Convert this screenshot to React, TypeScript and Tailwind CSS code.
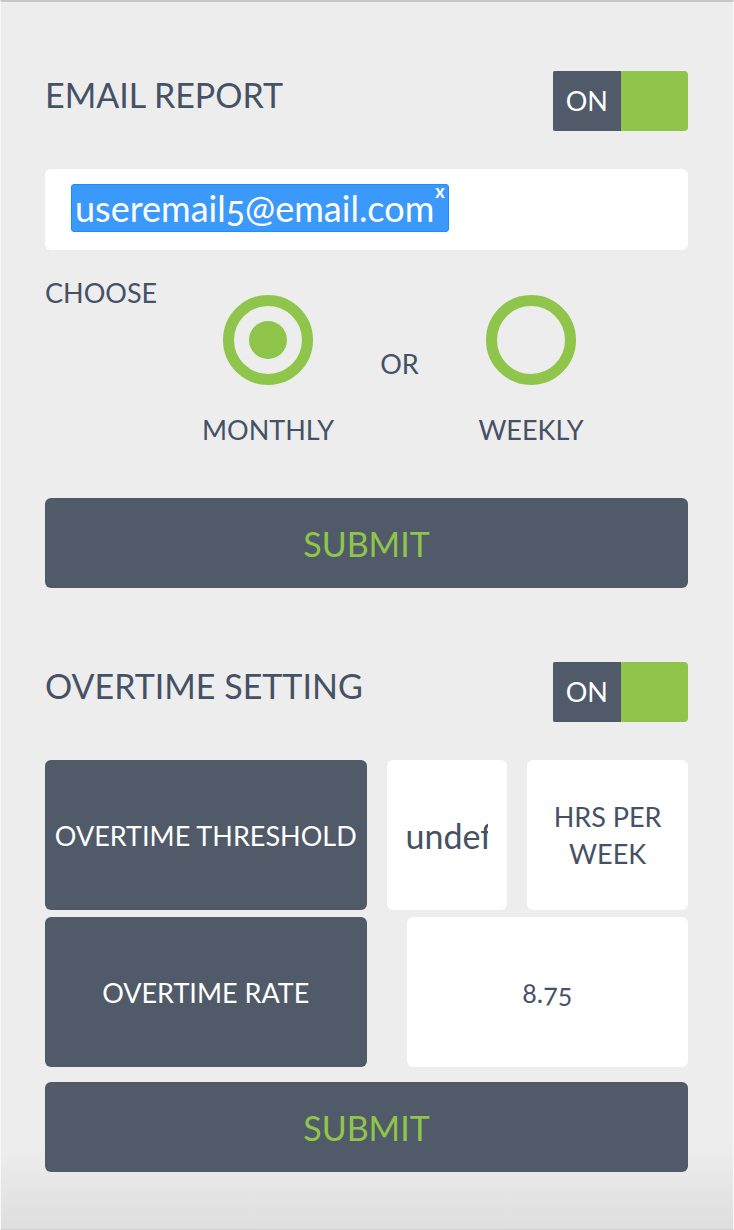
import { useState } from "react";

function Toggle({ label }: { label: string }) {
  const [on, setOn] = useState(true);
  return (
    <button
      type="button"
      role="switch"
      aria-checked={on}
      aria-label={label}
      onClick={() => setOn(!on)}
      className="flex h-[60px] w-[135px] shrink-0 overflow-hidden rounded-r-[4px] rounded-l-[2px] bg-[#8ec54a] text-[27px] leading-[60px] text-white"
    >
      <span className="w-1/2 bg-[#515a69]">{on ? "ON" : ""}</span>
      <span className="w-1/2">{on ? "" : "OFF"}</span>
    </button>
  );
}

function SectionHeader({ title }: { title: string }) {
  return (
    <div className="flex items-start justify-between">
      <h2 className="text-[34px] leading-[48px]">{title}</h2>
      <Toggle label={title} />
    </div>
  );
}

function Choice({ value, defaultChecked }: { value: string; defaultChecked?: boolean }) {
  return (
    <label className="flex w-[132px] flex-col items-center gap-[26px] whitespace-nowrap">
      <input
        type="radio"
        name="frequency"
        value={value}
        defaultChecked={defaultChecked}
        className="grid size-[90px] appearance-none place-items-center rounded-full border-[11px] border-[#8ec54a] checked:before:size-[38px] checked:before:rounded-full checked:before:bg-[#8ec54a] checked:before:content-['']"
      />
      <span>{value}</span>
    </label>
  );
}

function Submit() {
  return (
    <button type="submit" className="h-[90px] w-full rounded-[6px] bg-[#515a69] text-[34px] text-[#8ec54a]">
      SUBMIT
    </button>
  );
}

export default function App() {
  const [emails, setEmails] = useState(["useremail5@email.com"]);
  return (
    <main className="min-h-screen border-x border-t-2 border-b border-x-[#f7f7f7] border-t-[#c4c8c6] border-b-[#d2d2d2] bg-[#ededed] bg-[linear-gradient(to_top,#dedede,#ededed_80px)] pt-[69px] pr-[45px] pb-[57px] pl-11 font-[Lato,sans-serif] text-[27px] leading-[37px] text-[#455165] oldstyle-nums">
      <form onSubmit={(e) => e.preventDefault()}>
        <SectionHeader title="EMAIL REPORT" />
        <div className="mt-[38px] flex h-[81px] items-center rounded-[6px] bg-white px-[26px] pb-1">
          {emails.map((email) => (
            <span
              key={email}
              className="flex h-12 shrink-0 items-start rounded-[3px] border border-[#1a90ff] bg-[#3c99fc] px-[3px] text-[36px] leading-[46px] text-white"
            >
              {email}
              <button
                type="button"
                aria-label="Remove email"
                onClick={() => setEmails([])}
                className="ml-px text-[18px] leading-[12px] font-bold"
              >
                x
              </button>
            </span>
          ))}
          <input aria-label="Email address" type="text" className="h-12 w-0 min-w-0 flex-1 outline-none" />
        </div>
        <div role="radiogroup" aria-labelledby="choose" className="mt-6 flex">
          <span id="choose" className="w-[157px] shrink-0">
            CHOOSE
          </span>
          <div className="mt-[21px] flex items-start">
            <Choice value="MONTHLY" defaultChecked />
            <span className="mt-[50px] w-[131px] text-center">OR</span>
            <Choice value="WEEKLY" />
          </div>
        </div>
        <div className="mt-[50px]">
          <Submit />
        </div>
      </form>
      <form className="mt-[74px]" onSubmit={(e) => e.preventDefault()}>
        <SectionHeader title="OVERTIME SETTING" />
        <div className="mt-[38px] flex h-[150px]">
          <label
            htmlFor="threshold"
            className="flex w-1/2 shrink-0 items-center justify-center rounded-[6px] bg-[#515a69] whitespace-nowrap text-white"
          >
            OVERTIME THRESHOLD
          </label>
          <input
            id="threshold"
            defaultValue="undefined"
            className="ml-5 w-0 min-w-0 flex-1 rounded-[6px] bg-white px-[19px] text-[34px] outline-none"
          />
          <div className="ml-5 flex w-1/4 items-center justify-center rounded-[6px] bg-white px-4 text-center">
            HRS PER WEEK
          </div>
        </div>
        <div className="mt-[7px] flex h-[150px]">
          <label
            htmlFor="rate"
            className="flex w-1/2 shrink-0 items-center justify-center rounded-[6px] bg-[#515a69] whitespace-nowrap text-white"
          >
            OVERTIME RATE
          </label>
          <input
            id="rate"
            defaultValue="8.75"
            className="ml-10 w-0 min-w-0 flex-1 rounded-[6px] bg-white text-center outline-none"
          />
        </div>
        <div className="mt-[15px]">
          <Submit />
        </div>
      </form>
    </main>
  );
}
